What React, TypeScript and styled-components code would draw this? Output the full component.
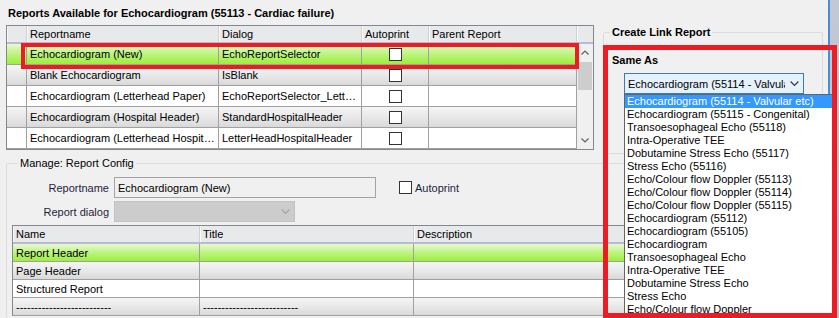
import React from 'react';
import styled, { createGlobalStyle, css } from 'styled-components';

const GlobalStyle = createGlobalStyle`
  html, body { margin: 0; padding: 0; background: #f0f0f0; }
  body {
    font-family: "Liberation Sans", Arial, sans-serif;
    font-size: 11px;
    color: #000;
  }
  * { box-sizing: border-box; }
`;

type Tone = 'green' | 'gray' | 'white';

const toneBg = {
  green: 'linear-gradient(#e6f9d2 0%, #b9f37a 55%, #9cef3c 100%)',
  gray: 'linear-gradient(#f5f5f5 0%, #e6e6e6 60%, #d9d9d9 100%)',
  white: '#ffffff',
};

const Window = styled.div`
  position: relative;
  width: 839px;
  height: 318px;
  overflow: hidden;
  display: flex;
  background: #f0f0f0;
`;

const Client = styled.div`
  flex: 1;
  display: flex;
  flex-direction: column;
  padding-left: 6px;
`;

const WindowEdge = styled.div`
  width: 11px;
  border-left: 2px solid #4a8bd6;
  background: linear-gradient(#c2c9d4, #b6bfcc);
`;

const TopRow = styled.div`
  display: flex;
  height: 157px;
`;

const LeftCol = styled.div`
  width: 588px;
  display: flex;
  flex-direction: column;
`;

const Title = styled.div`
  height: 25px;
  padding-left: 2px;
  display: flex;
  align-items: center;
  font-weight: bold;
  font-size: 11px;
`;

/* ---------- grids ---------- */

const GridBox = styled.div`
  position: relative;
  border: 1px solid #828790;
  background: #fff;
`;

const HeaderRow = styled.div<{ $cols: string; $h: number }>`
  display: grid;
  grid-template-columns: ${(p) => p.$cols};
  height: ${(p) => p.$h}px;
  background: #e8e9eb;
  border-bottom: 2px solid #b9b9d3;
`;

const HeaderCell = styled.div<{ $last?: boolean }>`
  display: flex;
  align-items: center;
  padding-left: 3px;
  border-right: ${(p) => (p.$last ? 'none' : '1px solid #cfd0d3')};
  box-shadow: inset 1px 0 0 #fafafa;
  white-space: nowrap;
`;

const Body = styled.div`
  display: flex;
`;

const Rows = styled.div`
  flex: 1;
  display: flex;
  flex-direction: column;
`;

const Row = styled.div<{ $cols: string; $h: number; $tone: Tone }>`
  display: grid;
  grid-template-columns: ${(p) => p.$cols};
  height: ${(p) => p.$h}px;
  background: ${(p) => toneBg[p.$tone]};
  border-bottom: 1px solid #a0a0a0;
`;

const Cell = styled.div<{ $center?: boolean }>`
  display: flex;
  align-items: center;
  padding-left: 3px;
  border-right: 1px solid #a0a0a0;
  white-space: nowrap;
  overflow: hidden;
  ${(p) =>
    p.$center &&
    css`
      justify-content: center;
      padding-left: 0;
    `}
`;

const CheckBox = styled.span`
  display: inline-block;
  width: 13px;
  height: 13px;
  border: 1px solid #333;
  background: #fff;
`;

const Scrollbar = styled.div`
  width: 16px;
  display: flex;
  flex-direction: column;
  background: #f0f0f0;
`;

const ScrollBtn = styled.div`
  height: 17px;
  display: flex;
  align-items: center;
  justify-content: center;
`;

const Thumb = styled.div`
  height: 28px;
  margin: 1px 1px 0 1px;
  background: #cdcdcd;
`;

const Spacer = styled.div`
  flex: 1;
`;

const Highlight = styled.div<{ $l: number; $t: number; $w: number; $h: number; $b: number }>`
  position: absolute;
  left: ${(p) => p.$l}px;
  top: ${(p) => p.$t}px;
  width: ${(p) => p.$w}px;
  height: ${(p) => p.$h}px;
  border: ${(p) => p.$b}px solid #ed1c24;
  pointer-events: none;
  z-index: 5;
`;

/* ---------- group boxes ---------- */

const GroupBox = styled.fieldset`
  margin: 0;
  border: 1px solid #dcdcdc;
  border-radius: 2px;
`;

const Legend = styled.legend<{ $bold?: boolean; $indent?: number }>`
  margin-left: ${(p) => p.$indent ?? 6}px;
  padding: 0 2px;
  line-height: 13px;
  font-weight: ${(p) => (p.$bold ? 'bold' : 'normal')};
`;

const RightCol = styled.div`
  margin-left: 9px;
  padding-top: 26px;
  width: 220px;
`;

const LinkGroup = styled(GroupBox)`
  height: 128px;
  padding: 0 8px;
`;

const BoldLabel = styled.div`
  margin-top: 14px;
  height: 14px;
  line-height: 14px;
  font-weight: bold;
`;

const ComboWrap = styled.div`
  position: relative;
  margin: 6px 0 0 12px;
  width: 180px;
`;

const Combo = styled.div<{ $disabled?: boolean; $w?: number }>`
  width: ${(p) => (p.$w ? `${p.$w}px` : 'auto')};
  height: 21px;
  display: flex;
  align-items: center;
  padding: 0 4px 0 3px;
  border: 1px solid ${(p) => (p.$disabled ? '#c2c2c2' : '#3d7bad')};
  background: ${(p) => (p.$disabled ? '#cccccc' : '#e5f1fb')};
  color: #000;
`;

const ComboText = styled.span`
  flex: 1;
  overflow: hidden;
  white-space: nowrap;
  margin-right: 5px;
`;

const DropList = styled.div`
  position: absolute;
  left: 0;
  top: 100%;
  width: 210px;
  height: 224px;
  background: #fff;
  border: 1px solid #646464;
  z-index: 4;
`;

const DropItem = styled.div<{ $selected?: boolean }>`
  height: 13px;
  line-height: 13px;
  padding-left: 2px;
  white-space: nowrap;
  background: ${(p) => (p.$selected ? '#3399ff' : 'transparent')};
  color: ${(p) => (p.$selected ? '#fff' : '#000')};
`;

const ManageGroup = styled(GroupBox)`
  width: 821px;
  flex: 1;
  padding: 0 0 0 5px;
  border-bottom: none;
`;

const FormRow = styled.div`
  display: flex;
  align-items: center;
  height: 21px;
  margin-bottom: 3px;
  &:first-of-type {
    margin-top: 7px;
  }
`;

const FieldLabel = styled.div`
  width: 97px;
  text-align: right;
  color: #1e1e3c;
  margin-right: 5px;
`;

const TextBox = styled.div`
  width: 262px;
  height: 21px;
  display: flex;
  align-items: center;
  padding-left: 3px;
  border: 1px solid #a4a4a4;
  background: #f0f0f0;
`;

const CheckField = styled.label`
  display: flex;
  align-items: center;
  gap: 3px;
  margin-left: 23px;
  color: #1e1e3c;
`;

const Grid2Box = styled(GridBox)`
  border-right: none;
  border-bottom: none;
  flex: 1;
`;

const Chevron = ({ up, color = '#606060', w = 8 }: { up?: boolean; color?: string; w?: number }) => (
  <svg width={w} height={w / 2 + 1} viewBox="0 0 8 5" fill="none">
    <polyline
      points={up ? '0.5,4.5 4,1 7.5,4.5' : '0.5,0.5 4,4 7.5,0.5'}
      stroke={color}
      strokeWidth="1.2"
    />
  </svg>
);

const reportCols = '20px 192px 143px 67px 148px';
const configCols = '187px 214px 1fr';

const reports: { name: string; dialog: string; tone: Tone }[] = [
  { name: 'Echocardiogram (New)', dialog: 'EchoReportSelector', tone: 'green' },
  { name: 'Blank Echocardiogram', dialog: 'IsBlank', tone: 'gray' },
  { name: 'Echocardiogram (Letterhead Paper)', dialog: 'EchoReportSelector_Lett…', tone: 'white' },
  { name: 'Echocardiogram (Hospital Header)', dialog: 'StandardHospitalHeader', tone: 'gray' },
  { name: 'Echocardiogram (Letterhead Hospit…', dialog: 'LetterHeadHospitalHeader', tone: 'white' },
];

const dashes = '--------------------------';
const configRows: { name: string; title: string; tone: Tone }[] = [
  { name: 'Report Header', title: '', tone: 'green' },
  { name: 'Page Header', title: '', tone: 'gray' },
  { name: 'Structured Report', title: '', tone: 'white' },
  { name: dashes, title: dashes, tone: 'gray' },
];

const sameAsOptions = [
  'Echocardiogram (55114 - Valvular etc)',
  'Echocardiogram (55115 - Congenital)',
  'Transoesophageal Echo (55118)',
  'Intra-Operative TEE',
  'Dobutamine Stress Echo (55117)',
  'Stress Echo (55116)',
  'Echo/Colour flow Doppler (55113)',
  'Echo/Colour flow Doppler (55114)',
  'Echo/Colour flow Doppler (55115)',
  'Echocardiogram (55112)',
  'Echocardiogram (55105)',
  'Echocardiogram',
  'Transoesophageal Echo',
  'Intra-Operative TEE',
  'Dobutamine Stress Echo',
  'Stress Echo',
  'Echo/Colour flow Doppler',
];

export default function App() {
  return (
    <>
      <GlobalStyle />
      <Window>
        <Client>
          <TopRow>
            <LeftCol>
              <Title>Reports Available for Echocardiogram (55113 - Cardiac failure)</Title>
              <GridBox>
                <HeaderRow $cols={`${reportCols} 16px`} $h={18}>
                  <HeaderCell />
                  <HeaderCell>Reportname</HeaderCell>
                  <HeaderCell>Dialog</HeaderCell>
                  <HeaderCell>Autoprint</HeaderCell>
                  <HeaderCell>Parent Report</HeaderCell>
                  <HeaderCell $last />
                </HeaderRow>
                <Body>
                  <Rows>
                    {reports.map((r) => (
                      <Row key={r.name} $cols={reportCols} $h={21} $tone={r.tone}>
                        <Cell />
                        <Cell>{r.name}</Cell>
                        <Cell>{r.dialog}</Cell>
                        <Cell $center>
                          <CheckBox />
                        </Cell>
                        <Cell />
                      </Row>
                    ))}
                  </Rows>
                  <Scrollbar>
                    <ScrollBtn>
                      <Chevron up />
                    </ScrollBtn>
                    <Thumb />
                    <Spacer />
                    <ScrollBtn>
                      <Chevron />
                    </ScrollBtn>
                  </Scrollbar>
                </Body>
                <Highlight $l={14} $t={17} $w={558} $h={26} $b={4} />
              </GridBox>
            </LeftCol>
            <RightCol>
              <LinkGroup>
                <Legend $bold $indent={-2}>Create Link Report</Legend>
                <BoldLabel>Same As</BoldLabel>
                <ComboWrap>
                  <Combo>
                    <ComboText>Echocardiogram (55114 - Valvular etc)</ComboText>
                    <Chevron color="#404040" w={9} />
                  </Combo>
                  <DropList>
                    {sameAsOptions.map((o, i) => (
                      <DropItem key={i} $selected={i === 0}>
                        {o}
                      </DropItem>
                    ))}
                  </DropList>
                </ComboWrap>
              </LinkGroup>
            </RightCol>
          </TopRow>

          <ManageGroup>
            <Legend>Manage: Report Config</Legend>
            <FormRow>
              <FieldLabel>Reportname</FieldLabel>
              <TextBox>Echocardiogram (New)</TextBox>
              <CheckField>
                <CheckBox />
                Autoprint
              </CheckField>
            </FormRow>
            <FormRow>
              <FieldLabel>Report dialog</FieldLabel>
              <Combo $disabled $w={181}>
                <ComboText />
                <Chevron color="#a6a6a6" w={9} />
              </Combo>
            </FormRow>
            <Grid2Box>
              <HeaderRow $cols={configCols} $h={18}>
                <HeaderCell>Name</HeaderCell>
                <HeaderCell>Title</HeaderCell>
                <HeaderCell $last>Description</HeaderCell>
              </HeaderRow>
              {configRows.map((r) => (
                <Row key={r.name} $cols={configCols} $h={18} $tone={r.tone}>
                  <Cell>{r.name}</Cell>
                  <Cell>{r.title}</Cell>
                  <Cell />
                </Row>
              ))}
            </Grid2Box>
          </ManageGroup>
        </Client>
        <WindowEdge />
        <Highlight $l={603} $t={45} $w={234} $h={273} $b={5} />
      </Window>
    </>
  );
}
